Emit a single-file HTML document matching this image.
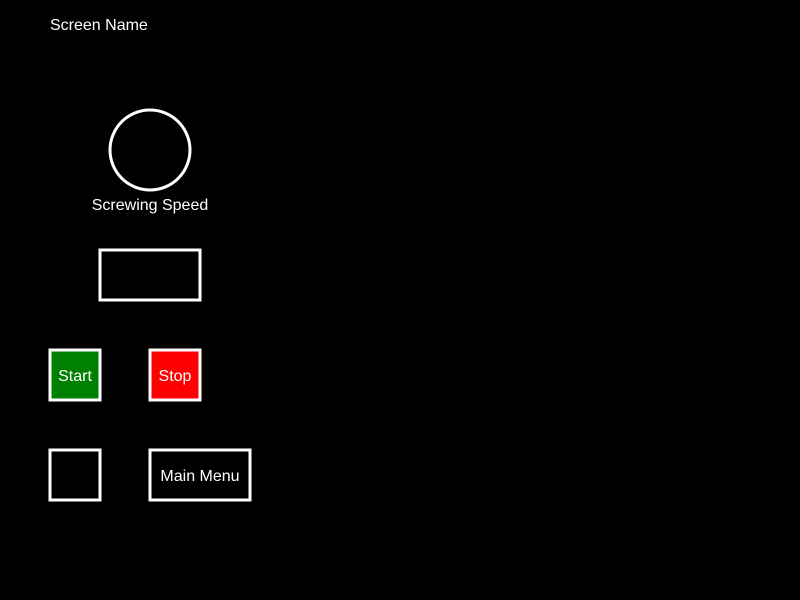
<!DOCTYPE html>
<html><head><style>html,body{margin:0;background:#000;width:800px;height:600px;overflow:hidden}</style></head>
<body>
<svg width="800" height="600" xmlns="http://www.w3.org/2000/svg" style="display:block;font-family:'Liberation Sans',sans-serif">
<rect width="800" height="600" fill="#000"/>
<text x="50" y="30" fill="#fff" font-size="16">Screen Name</text>
<circle cx="150" cy="150" r="40" fill="none" stroke="#fff" stroke-width="3"/>
<text x="150" y="210" fill="#fff" font-size="16" text-anchor="middle">Screwing Speed</text>
<rect x="100" y="250" width="100" height="50" fill="none" stroke="#fff" stroke-width="3"/>
<rect x="50" y="350" width="50" height="50" fill="#008000" stroke="#fff" stroke-width="3"/>
<text x="75" y="381" fill="#fff" font-size="16" text-anchor="middle">Start</text>
<rect x="150" y="350" width="50" height="50" fill="#f00" stroke="#fff" stroke-width="3"/>
<text x="175" y="381" fill="#fff" font-size="16" text-anchor="middle">Stop</text>
<rect x="50" y="450" width="50" height="50" fill="none" stroke="#fff" stroke-width="3"/>
<rect x="150" y="450" width="100" height="50" fill="none" stroke="#fff" stroke-width="3"/>
<text x="200" y="481" fill="#fff" font-size="16" text-anchor="middle">Main Menu</text>
</svg>
</body></html>
